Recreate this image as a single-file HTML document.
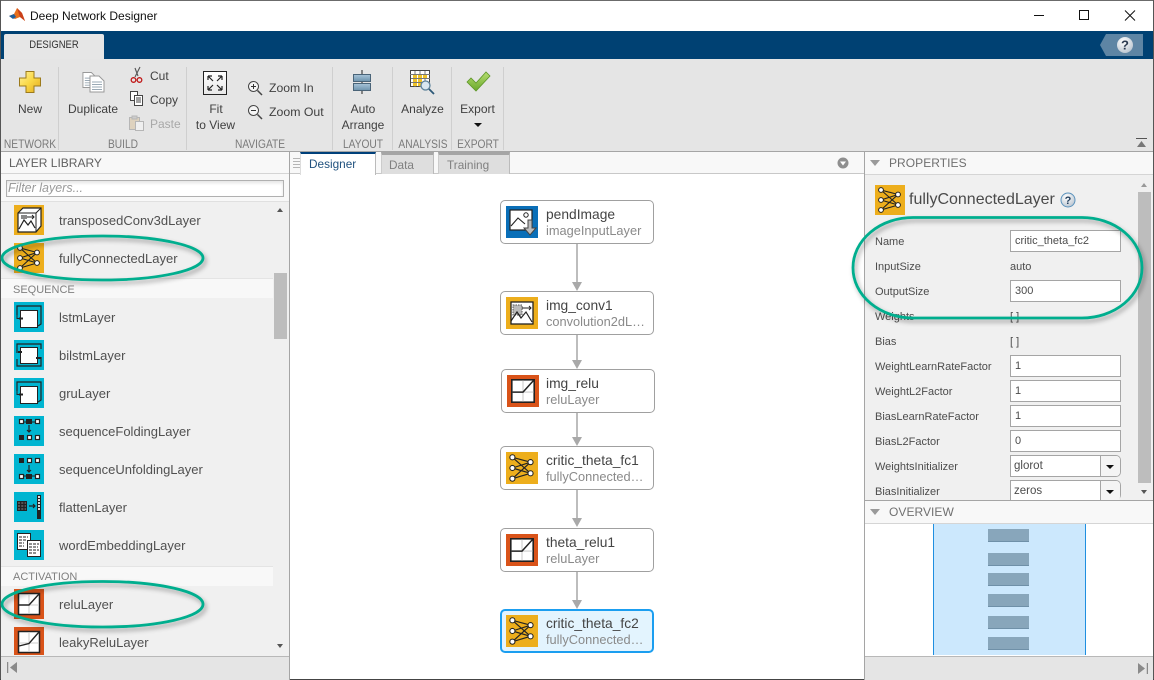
<!DOCTYPE html>
<html><head><meta charset="utf-8">
<style>
html,body{margin:0;padding:0;width:1154px;height:680px;overflow:hidden;background:#fff;font-family:"Liberation Sans",Arial,sans-serif;color:#444}
.a{position:absolute}
.t{position:absolute;white-space:nowrap;font-size:12px;line-height:14px;color:#404040}
.c{text-align:center;transform:translateX(-50%)}
.sep{position:absolute;top:67px;width:1px;height:83px;background:#cfcfcf}
.grp{position:absolute;top:137px;font-size:12px;line-height:14px;color:#7a7a7a;transform:translateX(-50%) scaleX(.85);white-space:nowrap}
.ic{position:absolute;width:30px;height:30px}
.lib{position:absolute;left:59px;font-size:13px;line-height:14px;color:#505050;white-space:nowrap}
.sec{position:absolute;left:1px;width:272px;height:20px;background:#f8f8f8;border-top:1px solid #e4e4e4;box-sizing:border-box;font-size:11px;color:#808080;padding:3px 0 0 12px;line-height:14px}
.node{position:absolute;width:152px;height:42px;border:1px solid #a0a0a0;border-radius:5px;background:#fff}
.node b{position:absolute;left:45px;top:6px;font-weight:normal;font-size:13.8px;line-height:15px;color:#444;white-space:nowrap}
.node i{position:absolute;left:45px;top:22px;font-style:normal;font-size:12.8px;line-height:15px;color:#8a8a8a;white-space:nowrap}
.node svg{position:absolute;left:5px;top:5px;width:32px;height:32px}
.pl{position:absolute;left:875px;font-size:11px;line-height:13px;color:#4c4c4c;white-space:nowrap;margin-top:1px}
.in{position:absolute;left:1010px;width:111px;height:22px;box-sizing:border-box;border:1px solid #a5a5a5;background:#fff;font-size:11px;line-height:21px;padding-left:4px;color:#4c4c4c}
.dd{position:absolute;left:1010px;width:111px;height:22px;box-sizing:border-box;border:1px solid #a5a5a5;border-radius:0 5px 5px 0;background:#fff;font-size:11.5px;line-height:21px;padding-left:3px;color:#4c4c4c}
.dd:after{content:"";position:absolute;right:0;top:0;width:19px;height:20px;border-left:1px solid #a5a5a5;border-radius:0 4px 4px 0;background:#f4f4f4}
.dd:before{content:"";position:absolute;z-index:2;right:6px;top:9px;border:4px solid transparent;border-top:4px solid #111;border-bottom:0}
.blk{position:absolute;left:988px;width:41px;background:#88a6bb;border-bottom:1px solid #6f90a8}
.ln{position:absolute;left:576px;width:2px;background:#bdbdbd}
.ar{position:absolute;left:572px;width:0;height:0;border-left:5px solid transparent;border-right:5px solid transparent;border-top:9px solid #a9a9a9}
.tab{position:absolute;box-sizing:border-box;font-size:11.8px;white-space:nowrap}
</style></head><body>

<svg width="0" height="0" style="position:absolute"><defs>
<symbol id="fc" viewBox="0 0 30 30"><rect width="30" height="30" fill="#edae1c"/>
<g stroke="#222" stroke-width="1.100" fill="none"><path d="M6 5L23 9.500M6 5L23 20M6 15L23 9.500M6 15L23 20M6 25L23 9.500M6 25L23 20"/></g>
<g fill="#fff" stroke="#222" stroke-width="1"><circle cx="6" cy="5" r="2.400"/><circle cx="6" cy="15" r="2.400"/><circle cx="6" cy="25" r="2.400"/><circle cx="23" cy="9.500" r="2.400"/><circle cx="23" cy="20" r="2.400"/></g></symbol>
<symbol id="relu" viewBox="0 0 30 30"><rect width="30" height="30" fill="#d95319"/><rect x="4.500" y="4.500" width="21" height="21" fill="#fff" stroke="#222" stroke-width="1.500"/><path d="M15 5V25M5 16H25" stroke="#ccc" fill="none"/><path d="M5 16H15L25 5" stroke="#222" stroke-width="1.400" fill="none"/></symbol>
<symbol id="leaky" viewBox="0 0 30 30"><rect width="30" height="30" fill="#d95319"/><rect x="4.500" y="4.500" width="21" height="21" fill="#fff" stroke="#222" stroke-width="1.500"/><path d="M15 5V25M5 16H25" stroke="#ccc" fill="none"/><path d="M5 19L15 16.500L25 5" stroke="#222" stroke-width="1.400" fill="none"/></symbol>
<symbol id="tc3" viewBox="0 0 30 30"><rect width="30" height="30" fill="#edae1c"/><path d="M4 8L9 3H27V21L22 27H4Z" fill="#fff" stroke="#222" stroke-width="1.200"/><path d="M4 8H22V27M22 8L27 3" fill="none" stroke="#222" stroke-width="1"/><path d="M5 24L10 15L14 20L17 16L21 23" fill="none" stroke="#222" stroke-width="1.200"/><rect x="7" y="10" width="6" height="4" fill="#888"/><path d="M13 12H20M18 10L20 12L18 14" stroke="#222" fill="none"/></symbol>
<symbol id="lstm" viewBox="0 0 30 30"><rect width="30" height="30" fill="#00b5d1"/><path d="M3 13V4H27V22L24 24" fill="none" stroke="#222" stroke-width="1.200"/><rect x="6.500" y="8.500" width="17" height="17" fill="#fff" stroke="#222"/><path d="M3 13V16.500H7" stroke="#222" fill="none"/><path d="M5 16.500H9" stroke="#222" stroke-width="2"/></symbol>
<symbol id="bilstm" viewBox="0 0 30 30"><rect width="30" height="30" fill="#00b5d1"/><path d="M3 13V4H27V9M3 19V26H27V17" fill="none" stroke="#222" stroke-width="1.200"/><rect x="6.500" y="7.500" width="17" height="16" fill="#fff" stroke="#222"/><path d="M4 12H8M22 18H27" stroke="#222" stroke-width="2"/></symbol>
<symbol id="sf" viewBox="0 0 30 30"><rect width="30" height="30" fill="#00b5d1"/><path d="M8 6H22" stroke="#222"/><g fill="#fff" stroke="#222" stroke-width="1.200"><rect x="5.500" y="3.500" width="4" height="4"/><rect x="21.500" y="3.500" width="4" height="4"/><rect x="13.500" y="19.500" width="4" height="4"/><rect x="21.500" y="19.500" width="4" height="4"/></g><rect x="12" y="3" width="6" height="5" fill="#222"/><rect x="5" y="19" width="5" height="5" fill="#222"/><path d="M15 9V16M13 14L15 16L17 14" stroke="#222" stroke-width="1.200" fill="none"/></symbol>
<symbol id="su" viewBox="0 0 30 30"><rect width="30" height="30" fill="#00b5d1"/><path d="M8 22H22" stroke="#222"/><g fill="#fff" stroke="#222" stroke-width="1.200"><rect x="13.500" y="4.500" width="4" height="4"/><rect x="21.500" y="4.500" width="4" height="4"/><rect x="5.500" y="20.500" width="4" height="4"/><rect x="21.500" y="20.500" width="4" height="4"/></g><rect x="5" y="4" width="5" height="5" fill="#222"/><rect x="12" y="20" width="6" height="5" fill="#222"/><path d="M15 11V18M13 16L15 18L17 16" stroke="#222" stroke-width="1.200" fill="none"/></symbol>
<symbol id="fl" viewBox="0 0 30 30"><rect width="30" height="30" fill="#00b5d1"/><rect x="3" y="9" width="10" height="10" fill="#222"/><path d="M4 11H12M4 14H12M4 17H12" stroke="#888" stroke-dasharray="2 1.300"/><path d="M15 14H21M19 12L21 14L19 16" stroke="#222" stroke-width="1.200" fill="none"/><rect x="23" y="3" width="4" height="24" fill="#222"/><path d="M25 4V18" stroke="#ddd" stroke-width="2" stroke-dasharray="2 1"/></symbol>
<symbol id="we" viewBox="0 0 30 30"><rect width="30" height="30" fill="#00b5d1"/><rect x="3.500" y="3.500" width="13" height="16" fill="#fff" stroke="#222"/><rect x="13.500" y="10.500" width="13" height="16" fill="#fff" stroke="#222"/><path d="M5 7H14M5 10H12M5 13H10M5 16H10M15 14H25M15 17H24M15 20H25M15 23H23" stroke="#222" stroke-dasharray="3 1"/></symbol>
<symbol id="conv" viewBox="0 0 32 32"><rect width="32" height="32" fill="#edae1c"/><rect x="5" y="5" width="22" height="22" fill="#fff" stroke="#222" stroke-width="1.300"/><rect x="7" y="8" width="9" height="10" fill="#bbb" stroke="#555" stroke-dasharray="1.500 1"/><path d="M16 11H25M23 9L25 11L23 13" stroke="#222" fill="none"/><path d="M5 24L11 15L15 21L20 15L26 25" fill="none" stroke="#222" stroke-width="1.200"/></symbol>
<symbol id="input" viewBox="0 0 32 32"><rect width="32" height="32" fill="#0a6fb8"/><rect x="4" y="4" width="22" height="20" fill="#fff" stroke="#222" stroke-width="1.200"/><circle cx="20" cy="9" r="2.200" fill="none" stroke="#222"/><path d="M5 20L12 12L19 18" fill="none" stroke="#222" stroke-width="1.100"/><path d="M22 14H26V22H30L24 29L18 22H22Z" fill="#bbb" stroke="#444"/></symbol>
<linearGradient id="gold" x1="0" y1="0" x2="1" y2="1"><stop offset="0" stop-color="#fff2a0"/><stop offset=".5" stop-color="#fad845"/><stop offset="1" stop-color="#e0a820"/></linearGradient>
<linearGradient id="grn" x1="0" y1="0" x2="0" y2="1"><stop offset="0" stop-color="#b6dd70"/><stop offset="1" stop-color="#6aa82b"/></linearGradient>
<linearGradient id="blue" x1="0" y1="0" x2="0" y2="1"><stop offset="0" stop-color="#a8c4d8"/><stop offset="1" stop-color="#6d93ad"/></linearGradient>
<radialGradient id="help" cx=".4" cy=".3" r=".8"><stop offset="0" stop-color="#fff"/><stop offset="1" stop-color="#b4c0cc"/></radialGradient>
<symbol id="doc" viewBox="0 0 16 18"><path d="M1 1H10L15 6V17H1Z" fill="#fff" stroke="#999"/><path d="M3 7H13M3 9.500H13M3 12H13M3 14.500H13" stroke="#9aa9b5"/></symbol>
</defs></svg>

<!-- window frame -->
<div class="a" style="left:0;top:0;width:1154px;height:1px;background:#6b6b6b"></div>
<div class="a" style="left:0;top:0;width:1px;height:680px;background:#555"></div>
<div class="a" style="left:1153px;top:0;width:1px;height:680px;background:#555"></div>
<div class="a" style="left:0;top:679px;width:1154px;height:1px;background:#444"></div>

<!-- title bar -->
<svg class="a" style="left:9px;top:7px" width="17" height="16" viewBox="0 0 17 16"><path d="M0 9L5 7L8 1L13 6L16 14L11 10L6 12Z" fill="#e8701d"/><path d="M8 1L13 6L16 14L11 10Z" fill="#c9401a"/><path d="M0 9L5 7L7 10L4 12Z" fill="#1d5f9c"/></svg>
<div class="t" style="left:30px;top:9px;font-size:12px;color:#111">Deep Network Designer</div>
<svg class="a" style="left:1030px;top:7px" width="120" height="18" viewBox="0 0 120 18"><path d="M4 8.500H14" stroke="#111" fill="none"/><rect x="49.500" y="3.500" width="9" height="9" fill="none" stroke="#111"/><path d="M95 3.500L105 13.500M105 3.500L95 13.500" stroke="#111" fill="none"/></svg>

<!-- blue bar -->
<div class="a" style="left:1px;top:31px;width:1152px;height:28px;background:#004173"></div>
<div class="a" style="left:4px;top:34px;width:100px;height:25px;background:#e6e6e6;border-radius:2px 2px 0 0"></div>
<div class="t" style="left:54px;top:38px;font-size:11px;color:#333;transform:translateX(-50%) scaleX(.86)">DESIGNER</div>
<svg class="a" style="left:1099px;top:34px" width="44" height="22" viewBox="0 0 44 22"><path d="M7 0H44V22H7L1 11Z" fill="#5e85a4"/><circle cx="26" cy="11" r="8" fill="url(#help)"/><text x="26" y="15.500" text-anchor="middle" font-family="Liberation Sans" font-size="13" font-weight="bold" fill="#2b3a50">?</text></svg>

<!-- ribbon -->
<div class="a" style="left:1px;top:59px;width:1152px;height:92px;background:#e5e5e5"></div>
<div class="sep" style="left:58px"></div><div class="sep" style="left:186px"></div><div class="sep" style="left:332px"></div><div class="sep" style="left:392px"></div><div class="sep" style="left:451px"></div><div class="sep" style="left:503px"></div>

<svg class="a" style="left:18px;top:70px" width="24" height="24" viewBox="0 0 24 24"><path d="M8 1.500H16V8H22.500V16H16V22.500H8V16H1.500V8H8Z" fill="url(#gold)" stroke="#9c7a1c"/></svg>
<div class="t c" style="left:30px;top:102px">New</div>

<svg class="a" style="left:82px;top:71px" width="23" height="23" viewBox="0 0 23 23"><use href="#doc" x="0" y="0" width="15" height="18"/><use href="#doc" x="7" y="4" width="16" height="18"/></svg>
<div class="t c" style="left:93px;top:102px">Duplicate</div>

<svg class="a" style="left:130px;top:66px" width="15" height="18" viewBox="0 0 15 18"><path d="M10 1L5 11M5 2L8 10" stroke="#555" stroke-width="1.100" fill="none"/><circle cx="3.500" cy="14" r="2.300" fill="none" stroke="#c01818" stroke-width="1.300"/><circle cx="9.500" cy="14" r="2.300" fill="none" stroke="#c01818" stroke-width="1.300"/></svg>
<div class="t" style="left:150px;top:69px">Cut</div>
<svg class="a" style="left:130px;top:91px" width="13" height="15" viewBox="0 0 13 15"><rect x=".5" y=".5" width="7" height="9" fill="#fff" stroke="#444"/><rect x="4.500" y="4.500" width="8" height="10" fill="#fff" stroke="#444"/><path d="M6 7H11M6 9H11M6 11H11" stroke="#444"/></svg>
<div class="t" style="left:150px;top:93px">Copy</div>
<svg class="a" style="left:129px;top:115px;opacity:.42" width="15" height="16" viewBox="0 0 15 16"><rect x=".5" y="2.500" width="10" height="12" fill="#d5b98a" stroke="#777"/><rect x="3" y="1" width="5" height="3" fill="#aaa" stroke="#777"/><rect x="6.500" y="6.500" width="8" height="9" fill="#fff" stroke="#777"/></svg>
<div class="t" style="left:150px;top:117px;color:#a8a8a8">Paste</div>

<div class="a" style="left:203px;top:71px;width:22px;height:22px;border:1px solid #222;background:linear-gradient(#fff,#e8e8e8)"></div>
<svg class="a" style="left:204px;top:72px" width="22" height="22" viewBox="0 0 22 22"><path d="M4 4L9 9M4 4V8M4 4H8M18 4L13 9M18 4V8M18 4H14M4 18L9 13M4 18V14M4 18H8M18 18L13 13M18 18V14M18 18H14" stroke="#222" stroke-width="1.200" fill="none"/></svg>
<div class="t c" style="left:216px;top:102px">Fit</div>
<div class="t c" style="left:215.500px;top:118px">to View</div>

<svg class="a" style="left:247px;top:80px" width="16" height="16" viewBox="0 0 16 16"><circle cx="6.500" cy="6.500" r="5" fill="#f5f5f5" stroke="#444"/><path d="M4 6.500H9M6.500 4V9" stroke="#333"/><path d="M10.500 10.500L15 15" stroke="#444" stroke-width="1.500"/></svg>
<div class="t" style="left:269px;top:81px;font-size:12.200px">Zoom In</div>
<svg class="a" style="left:247px;top:104px" width="16" height="16" viewBox="0 0 16 16"><circle cx="6.500" cy="6.500" r="5" fill="#f5f5f5" stroke="#444"/><path d="M4 6.500H9" stroke="#333"/><path d="M10.500 10.500L15 15" stroke="#444" stroke-width="1.500"/></svg>
<div class="t" style="left:269px;top:105px;font-size:12.300px">Zoom Out</div>

<svg class="a" style="left:353px;top:70px" width="18" height="24" viewBox="0 0 18 24"><path d="M9 0V24" stroke="#222"/><rect x=".5" y="4.500" width="17" height="7" fill="url(#blue)" stroke="#4a6478"/><rect x=".5" y="13.500" width="17" height="7" fill="url(#blue)" stroke="#4a6478"/></svg>
<div class="t c" style="left:363px;top:102px">Auto</div>
<div class="t c" style="left:363px;top:118px">Arrange</div>

<svg class="a" style="left:410px;top:70px" width="25" height="25" viewBox="0 0 25 25"><rect x=".5" y=".5" width="19" height="16" fill="#fff" stroke="#444"/><path d="M0 4.500H20M5 1V17M10 1V17M15 1V17M1 8.500H20M1 12.500H20" stroke="#777"/><g fill="#eec22a"><rect x="3" y="5" width="4" height="3"/><rect x="8" y="5" width="4" height="3"/><rect x="13" y="5" width="4" height="3"/><rect x="3" y="9" width="4" height="3"/><rect x="8" y="9" width="4" height="3"/><rect x="3" y="13" width="4" height="3"/><rect x="8" y="13" width="4" height="3"/></g><circle cx="15.500" cy="15.500" r="4.500" fill="#d8e6f0" stroke="#5b8199" stroke-width="1.300"/><path d="M19 19L24 24" stroke="#2d5878" stroke-width="1.800"/></svg>
<div class="t c" style="left:422.500px;top:102px">Analyze</div>

<svg class="a" style="left:466px;top:71px" width="25" height="21" viewBox="0 0 25 21"><path d="M1 11L5 7L10 12L20 1L24 5L10 20Z" fill="url(#grn)" stroke="#5d9628" stroke-width=".8"/></svg>
<div class="t c" style="left:477.500px;top:102px">Export</div>
<div class="a" style="left:474px;top:123px;border:4px solid transparent;border-top:4px solid #111;border-bottom:0"></div>

<div class="grp" style="left:30px">NETWORK</div><div class="grp" style="left:123px">BUILD</div><div class="grp" style="left:260px">NAVIGATE</div><div class="grp" style="left:363px">LAYOUT</div><div class="grp" style="left:423px">ANALYSIS</div><div class="grp" style="left:478px">EXPORT</div>
<svg class="a" style="left:1136px;top:138px" width="11" height="10" viewBox="0 0 11 10"><path d="M0 .5H11" stroke="#555"/><path d="M1 9L5.500 3L10 9Z" fill="#777"/></svg>

<div class="a" style="left:1px;top:151px;width:1152px;height:1px;background:#a5a5a5"></div>

<!-- left panel -->
<div class="a" style="left:1px;top:152px;width:288px;height:22px;background:#f8f8f8;border-bottom:1px solid #d5d5d5;box-sizing:border-box"></div>
<div class="t" style="left:9px;top:156px;color:#606060">LAYER LIBRARY</div>
<div class="a" style="left:1px;top:174px;width:288px;height:28px;background:#f8f8f8;border-bottom:1px solid #e0e0e0;box-sizing:border-box"></div>
<div class="a" style="left:6px;top:180px;width:278px;height:17px;box-sizing:border-box;border:1px solid #b0b0b0;background:#fff;box-shadow:inset 0 2px 3px #e4e4e4;font-style:italic;font-size:12.500px;line-height:14px;color:#9a9a9a;padding-left:1px">Filter layers...</div>
<div class="a" style="left:1px;top:202px;width:288px;height:454px;background:#f0f0f0"></div>
<div class="a" style="left:289px;top:152px;width:1px;height:528px;background:#a5a5a5"></div>

<svg class="ic" style="left:14px;top:205px"><use href="#tc3"/></svg><div class="lib" style="top:214px">transposedConv3dLayer</div>
<svg class="ic" style="left:14px;top:243px"><use href="#fc"/></svg><div class="lib" style="top:252px">fullyConnectedLayer</div>
<div class="sec" style="top:278px;padding-top:4px">SEQUENCE</div>
<svg class="ic" style="left:14px;top:302px"><use href="#lstm"/></svg><div class="lib" style="top:311px">lstmLayer</div>
<svg class="ic" style="left:14px;top:340px"><use href="#bilstm"/></svg><div class="lib" style="top:349px">bilstmLayer</div>
<svg class="ic" style="left:14px;top:378px"><use href="#lstm"/></svg><div class="lib" style="top:387px">gruLayer</div>
<svg class="ic" style="left:14px;top:416px"><use href="#sf"/></svg><div class="lib" style="top:425px">sequenceFoldingLayer</div>
<svg class="ic" style="left:14px;top:454px"><use href="#su"/></svg><div class="lib" style="top:463px">sequenceUnfoldingLayer</div>
<svg class="ic" style="left:14px;top:492px"><use href="#fl"/></svg><div class="lib" style="top:501px">flattenLayer</div>
<svg class="ic" style="left:14px;top:530px"><use href="#we"/></svg><div class="lib" style="top:539px">wordEmbeddingLayer</div>
<div class="sec" style="top:566px">ACTIVATION</div>
<svg class="ic" style="left:14px;top:589px"><use href="#relu"/></svg><div class="lib" style="top:598px">reluLayer</div>
<svg class="ic" style="left:14px;top:627px;height:28px"><use href="#leaky" height="30" width="30"/></svg><div class="lib" style="top:636px">leakyReluLayer</div>

<div class="a" style="left:274px;top:273px;width:13px;height:66px;background:#bdbdbd"></div>
<div class="a" style="left:277px;top:208px;border:3.500px solid transparent;border-bottom:4px solid #555;border-top:0"></div>
<div class="a" style="left:277px;top:644px;border:3.500px solid transparent;border-top:4px solid #555;border-bottom:0"></div>

<div class="a" style="left:1px;top:656px;width:288px;height:24px;background:#e5e5e5;border-top:1px solid #b8b8b8;box-sizing:border-box"></div>
<svg class="a" style="left:7px;top:662px" width="11" height="11" viewBox="0 0 11 11"><path d="M.5 0V11" stroke="#8a8a8a" stroke-width="1.500"/><path d="M10 0V11L3 5.500Z" fill="#8a8a8a"/></svg>

<!-- center -->
<div class="a" style="left:290px;top:152px;width:574px;height:22px;background:#f8f8f8;border-bottom:1px solid #c8c8c8;box-sizing:border-box"></div>
<svg class="a" style="left:293px;top:157px" width="8" height="12" viewBox="0 0 8 12"><path d="M0 1.500H8M0 4.500H8M0 7.500H8M0 10.500H8" stroke="#b5b5b5"/></svg>
<div class="tab" style="left:300px;top:152px;width:76px;height:23px;background:#fff;border-top:2px solid #00407a;border-right:1px solid #bbb;border-left:1px solid #ddd;padding-left:8px;line-height:21px;color:#21527f">Designer</div>
<div class="tab" style="left:381px;top:152px;width:53px;height:22px;background:#dedede;border-top:3px solid #a5a5a5;border-right:1px solid #bbb;border-left:1px solid #ccc;padding-left:7px;line-height:20px;color:#808080">Data</div>
<div class="tab" style="left:438px;top:152px;width:72px;height:22px;background:#dedede;border-top:3px solid #a5a5a5;border-right:1px solid #bbb;border-left:1px solid #ccc;padding-left:8px;line-height:20px;color:#808080">Training</div>
<svg class="a" style="left:837px;top:157px" width="12" height="12" viewBox="0 0 12 12"><circle cx="6" cy="6" r="5.500" fill="#8f8f8f"/><path d="M3 4.500H9L6 8.500Z" fill="#fff"/></svg>

<div class="ln" style="top:244px;height:40px"></div><div class="ar" style="top:282px"></div>
<div class="ln" style="top:335px;height:27px"></div><div class="ar" style="top:360px"></div>
<div class="ln" style="top:413px;height:27px"></div><div class="ar" style="top:437px"></div>
<div class="ln" style="top:490px;height:30px"></div><div class="ar" style="top:518px"></div>
<div class="ln" style="top:572px;height:30px"></div><div class="ar" style="top:600px"></div>

<div class="node" style="left:500px;top:200px"><svg><use href="#input"/></svg><b>pendImage</b><i>imageInputLayer</i></div>
<div class="node" style="left:500px;top:291px"><svg><use href="#conv"/></svg><b>img_conv1</b><i>convolution2dL…</i></div>
<div class="node" style="left:501px;top:369px"><svg><use href="#relu"/></svg><b style="left:44px">img_relu</b><i style="left:44px">reluLayer</i></div>
<div class="node" style="left:500px;top:446px"><svg><use href="#fc"/></svg><b>critic_theta_fc1</b><i>fullyConnected…</i></div>
<div class="node" style="left:500px;top:528px"><svg><use href="#relu"/></svg><b>theta_relu1</b><i>reluLayer</i></div>
<div class="node" style="left:500px;top:609px;border:2px solid #1b9ef0;background:#e3f4fe;width:150px;height:40px"><svg style="left:4px;top:4px"><use href="#fc"/></svg><b style="left:44px;top:5px">critic_theta_fc2</b><i style="left:44px;top:21px">fullyConnected…</i></div>

<!-- right panel -->
<div class="a" style="left:864px;top:152px;width:1px;height:528px;background:#a5a5a5"></div>
<div class="a" style="left:865px;top:152px;width:288px;height:23px;background:#f8f8f8;border-bottom:1px solid #d5d5d5;box-sizing:border-box"></div>
<div class="a" style="left:870px;top:160px;border:5px solid transparent;border-top:6px solid #9a9a9a;border-bottom:0"></div>
<div class="t" style="left:889px;top:156px;color:#707070;letter-spacing:.05px">PROPERTIES</div>
<div class="a" style="left:865px;top:175px;width:288px;height:325px;background:#f0f0f0"></div>
<div class="a" style="left:1138px;top:192px;width:13px;height:291px;background:#bdbdbd"></div>
<div class="a" style="left:1141px;top:183px;border:3.500px solid transparent;border-bottom:4px solid #999;border-top:0"></div>
<div class="a" style="left:1141px;top:490px;border:3.500px solid transparent;border-top:4px solid #555;border-bottom:0"></div>

<svg class="ic" style="left:875px;top:185px"><use href="#fc"/></svg>
<div class="t" style="left:909px;top:191px;font-size:16px;line-height:17px;color:#4a4a4a">fullyConnectedLayer</div>
<svg class="a" style="left:1060px;top:192px" width="16" height="16" viewBox="0 0 16 16"><circle cx="8" cy="8" r="7" fill="url(#help)" stroke="#5b93bd"/><text x="8" y="12" text-anchor="middle" font-family="Liberation Sans" font-size="11" font-weight="bold" fill="#24405e">?</text></svg>

<div class="pl" style="top:235px">Name</div><div class="in" style="top:230px">critic_theta_fc2</div>
<div class="pl" style="top:260px">InputSize</div><div class="pl" style="left:1010px;top:260px">auto</div>
<div class="pl" style="top:285px">OutputSize</div><div class="in" style="top:280px">300</div>
<div class="pl" style="top:310px">Weights</div><div class="pl" style="left:1010px;top:310px">[ ]</div>
<div class="pl" style="top:335px">Bias</div><div class="pl" style="left:1010px;top:335px">[ ]</div>
<div class="pl" style="top:360px">WeightLearnRateFactor</div><div class="in" style="top:355px">1</div>
<div class="pl" style="top:385px">WeightL2Factor</div><div class="in" style="top:380px">1</div>
<div class="pl" style="top:410px">BiasLearnRateFactor</div><div class="in" style="top:405px">1</div>
<div class="pl" style="top:435px">BiasL2Factor</div><div class="in" style="top:430px">0</div>
<div class="pl" style="top:460px">WeightsInitializer</div><div class="dd" style="top:455px">glorot</div>
<div class="pl" style="top:485px">BiasInitializer</div><div class="dd" style="top:480px;height:20px;border-bottom:0">zeros</div>

<div class="a" style="left:865px;top:500px;width:288px;height:24px;background:#f8f8f8;border-top:1px solid #a5a5a5;border-bottom:1px solid #d5d5d5;box-sizing:border-box"></div>
<div class="a" style="left:870px;top:509px;border:5px solid transparent;border-top:6px solid #9a9a9a;border-bottom:0"></div>
<div class="t" style="left:889px;top:505px;color:#707070;letter-spacing:.05px">OVERVIEW</div>
<div class="a" style="left:933px;top:524px;width:153px;height:131px;box-sizing:border-box;background:#cce8fd;border-left:1px solid #1f8fe0;border-right:1px solid #1f8fe0"></div>
<div class="blk" style="top:529px;height:12px"></div>
<div class="blk" style="top:553px;height:12px"></div>
<div class="blk" style="top:573px;height:12px"></div>
<div class="blk" style="top:594px;height:12px"></div>
<div class="blk" style="top:616px;height:12px"></div>
<div class="blk" style="top:637px;height:12px"></div>
<div class="a" style="left:865px;top:656px;width:288px;height:24px;background:#e5e5e5;border-top:1px solid #b8b8b8;box-sizing:border-box"></div>
<svg class="a" style="left:1137px;top:663px" width="11" height="11" viewBox="0 0 11 11"><path d="M10.500 0V11" stroke="#8a8a8a" stroke-width="1.500"/><path d="M1 0V11L8 5.500Z" fill="#8a8a8a"/></svg>

<!-- annotation ellipses -->
<svg class="a" style="left:0;top:0;pointer-events:none" width="1154" height="680" viewBox="0 0 1154 680">
<defs><filter id="sh" x="-10%" y="-30%" width="120%" height="160%"><feDropShadow dx="2" dy="3" stdDeviation="2.500" flood-color="#000" flood-opacity=".35"/></filter></defs>
<g fill="none" stroke="#00ae8e" stroke-width="2.800" filter="url(#sh)">
<rect x="2" y="236" width="201" height="44" rx="100" ry="22"/>
<rect x="2" y="581.500" width="201" height="45.500" rx="100" ry="22.700"/>
<rect x="853" y="217.500" width="289" height="100.500" rx="60" ry="50"/>
</g></svg>
</body></html>
